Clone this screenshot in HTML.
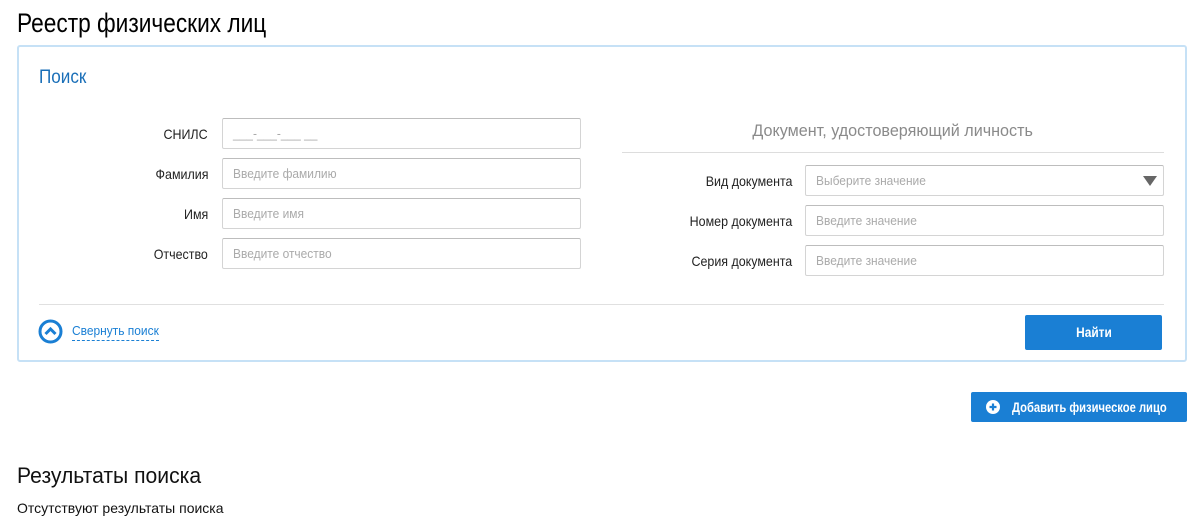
<!DOCTYPE html>
<html><head><meta charset="utf-8"><style>
*{margin:0;padding:0;box-sizing:border-box}
body{width:1200px;height:524px;background:#fff;position:relative;overflow:hidden;font-family:"Liberation Sans",sans-serif;color:#111}
.a{position:absolute;white-space:nowrap}
.n{display:inline-block}
.lbl{position:absolute;text-align:right;font-size:14px;color:#222;width:200px;line-height:16px}
.lbl .n{transform:scaleX(0.89);transform-origin:right}
.in{position:absolute;border:1px solid #d4d4d4;border-top-color:#bdbdbd;border-radius:2px;height:31px;font-size:13px;color:#aaa;padding-left:10px;line-height:29px}
.in .n{transform:scaleX(0.92);transform-origin:left}
</style></head><body>
<div class="a" style="left:17px;top:6px;font-size:27px;line-height:34px;color:#000"><span class="n" style="transform:scaleX(0.84);transform-origin:left">Реестр физических лиц</span></div>
<div class="a" style="left:17px;top:45px;width:1170px;height:317px;border:2px solid #c6e1f6;border-radius:3px"></div>
<div class="a" style="left:39px;top:66px;font-size:19px;color:#1a6fb8;line-height:24px"><span class="n" style="transform:scaleX(0.9);transform-origin:left">Поиск</span></div>

<div class="lbl" style="left:8px;top:126px"><span class="n">СНИЛС</span></div>
<div class="lbl" style="left:8px;top:166px"><span class="n">Фамилия</span></div>
<div class="lbl" style="left:8px;top:206px"><span class="n">Имя</span></div>
<div class="lbl" style="left:8px;top:246px"><span class="n">Отчество</span></div>
<div class="in" style="left:222px;top:118px;width:359px"><span class="n">___-___-___ __</span></div>
<div class="in" style="left:222px;top:158px;width:359px"><span class="n">Введите фамилию</span></div>
<div class="in" style="left:222px;top:198px;width:359px"><span class="n">Введите имя</span></div>
<div class="in" style="left:222px;top:238px;width:359px"><span class="n">Введите отчество</span></div>

<div class="a" style="left:622px;top:120px;width:542px;text-align:center;font-size:17px;color:#8a8a8a;line-height:22px"><span class="n" style="transform:scaleX(0.95)">Документ, удостоверяющий личность</span></div>
<div class="a" style="left:622px;top:152px;width:542px;height:1px;background:#ddd"></div>
<div class="lbl" style="left:592px;top:173px"><span class="n">Вид документа</span></div>
<div class="lbl" style="left:592px;top:213px"><span class="n">Номер документа</span></div>
<div class="lbl" style="left:592px;top:253px"><span class="n">Серия документа</span></div>
<div class="in" style="left:805px;top:165px;width:359px"><span class="n">Выберите значение</span></div>
<div class="a" style="left:1143px;top:176px;width:0;height:0;border-left:7px solid transparent;border-right:7px solid transparent;border-top:10px solid #666"></div>
<div class="in" style="left:805px;top:205px;width:359px"><span class="n">Введите значение</span></div>
<div class="in" style="left:805px;top:245px;width:359px"><span class="n">Введите значение</span></div>

<div class="a" style="left:39px;top:304px;width:1125px;height:1px;background:#e0e0e0"></div>
<svg class="a" style="left:38px;top:319px" width="25" height="25" viewBox="0 0 25 25"><circle cx="12.5" cy="12.5" r="10.5" fill="none" stroke="#1a7fd4" stroke-width="3"/><path d="M7.5 15 L12.5 10 L17.5 15" fill="none" stroke="#1a7fd4" stroke-width="3"/></svg>
<div class="a" style="left:72px;top:323px;width:87px;font-size:13px;color:#1a7fd4;line-height:16px;border-bottom:1px dashed #1a7fd4;padding-bottom:1px"><span class="n" style="transform:scaleX(0.92);transform-origin:left">Свернуть поиск</span></div>
<div class="a" style="left:1025px;top:315px;width:137px;height:35px;background:#1a7fd4;border-radius:2px;color:#fff;font-size:14px;font-weight:bold;text-align:center;line-height:35px"><span class="n" style="transform:scaleX(0.85)">Найти</span></div>

<div class="a" style="left:971px;top:392px;width:216px;height:30px;background:#1a7fd4;border-radius:2px;color:#fff;font-size:14px;font-weight:bold;line-height:30px;padding-left:41px"><span class="n" style="transform:scaleX(0.8);transform-origin:left">Добавить физическое лицо</span></div>
<svg class="a" style="left:985px;top:399px" width="16" height="16" viewBox="0 0 16 16"><circle cx="8" cy="8" r="7" fill="#fff"/><path d="M8 4.5V11.5M4.5 8H11.5" stroke="#1a7fd4" stroke-width="2.2"/></svg>

<div class="a" style="left:17px;top:462px;font-size:22px;line-height:28px;color:#111"><span class="n" style="transform:scaleX(0.96);transform-origin:left">Результаты поиска</span></div>
<div class="a" style="left:17px;top:500px;font-size:14px;line-height:16px;color:#111">Отсутствуют результаты поиска</div>
</body></html>
